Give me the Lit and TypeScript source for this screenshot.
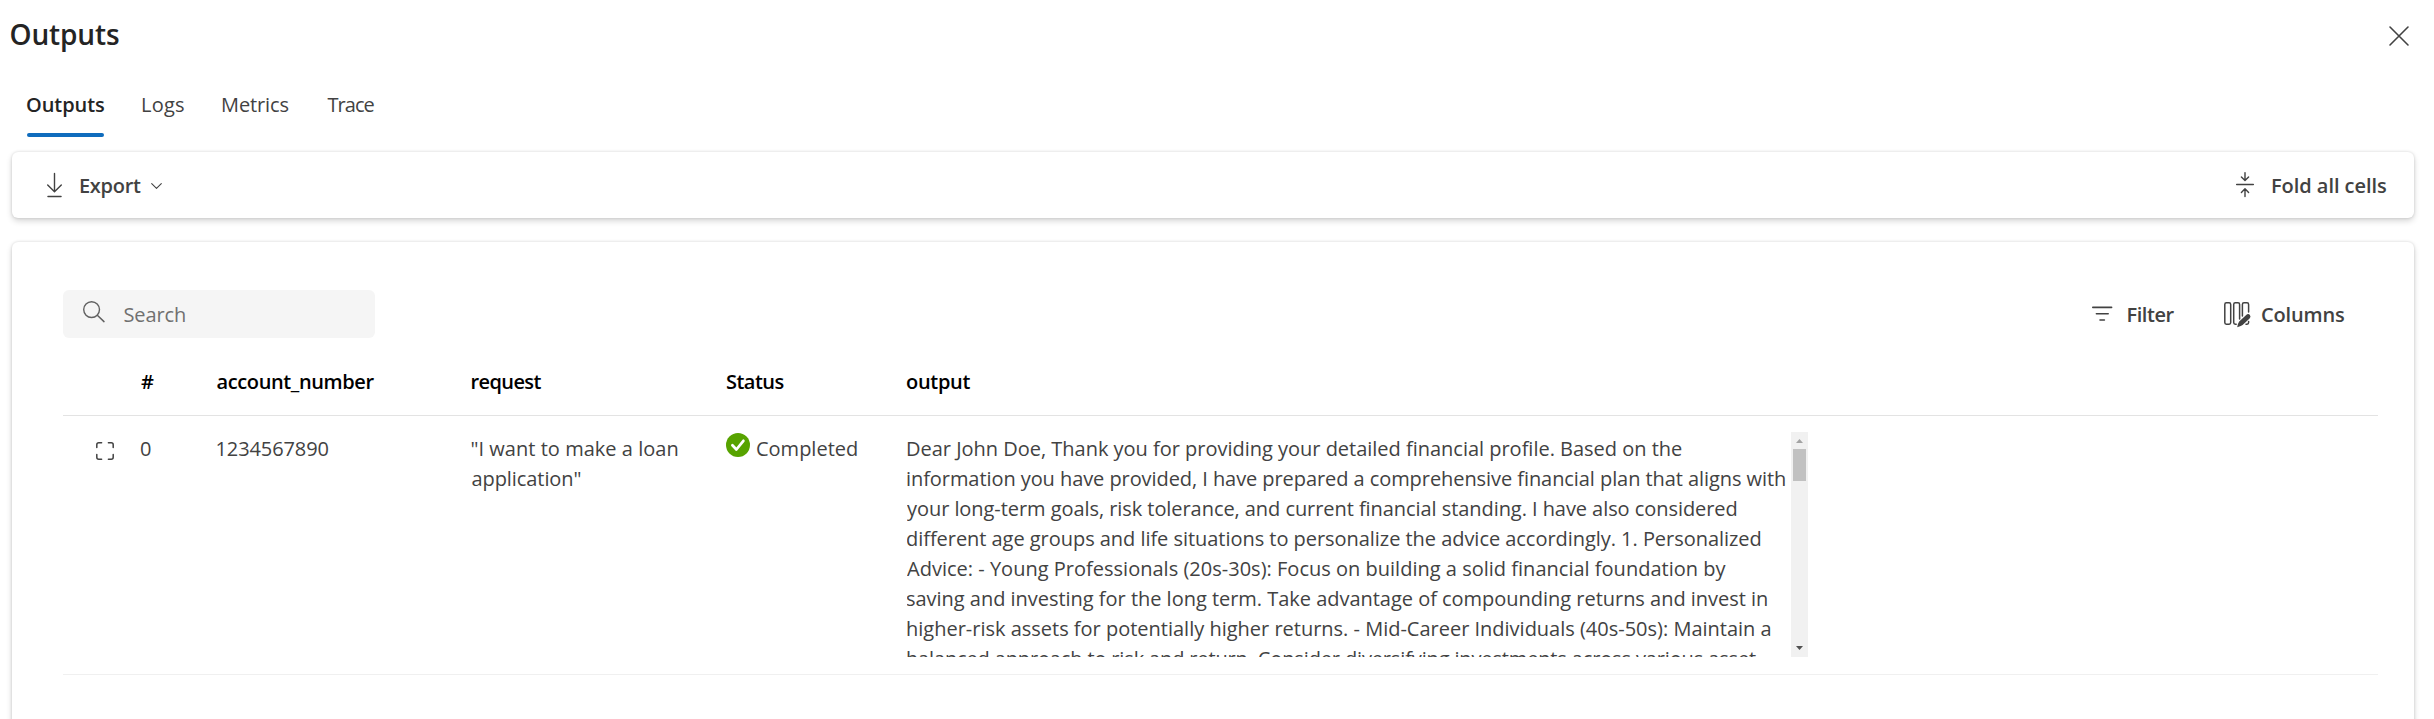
import { LitElement, html, css, svg } from "lit";
import { customElement, property, state } from "lit/decorators.js";

// One line of text, tracked so that its ink spans exactly `w` pixels.
@customElement("fit-text")
class FitText extends LitElement {
  @property() text = "";
  @property({ type: Number }) w = 0;
  @state() spacing = 0;
  @state() shift = 0;
  static styles = css`
    :host { display: block; flex: none; white-space: pre; }
    .line { display: block; }
  `;
  firstUpdated() {
    const cs = getComputedStyle(this);
    const ctx = document.createElement("canvas").getContext("2d")!;
    ctx.font = `${cs.fontWeight} ${cs.fontSize} ${cs.fontFamily}`;
    const m = ctx.measureText(this.text);
    const ink = m.actualBoundingBoxRight + m.actualBoundingBoxLeft;
    this.spacing = this.text.length > 1 ? (this.w - ink) / (this.text.length - 1) : 0;
    this.shift = m.actualBoundingBoxLeft;
  }
  render() {
    return html`<span class="line" style="width:${this.w}px;letter-spacing:${this.spacing}px;text-indent:${this.shift}px">${this.text}</span>`;
  }
}

const t = (text: string, w: number) => html`<fit-text .text=${text} .w=${w}></fit-text>`;

const icons = {
  close: svg`<path d="M1 1 L19 19 M19 1 L1 19" stroke-width="1.6"/>`,
  download: svg`<path d="M7.5 0.5 V18.5 M0.7 12 L7.5 18.8 L14.3 12" stroke-width="1.4"/><path d="M1 23.4 H14" stroke-width="1.5"/>`,
  chevron: svg`<path d="M0.7 0.7 L5.5 5.3 L10.3 0.7" stroke-width="1.1"/>`,
  fold: svg`<path d="M0.7 12.5 H17.3" stroke-width="1.5"/><path d="M9 0.6 V8 M5.4 5 L9 8.6 L12.6 5 M9 24.6 V17.4 M5.4 20.4 L9 16.8 L12.6 20.4" stroke-width="1.4"/>`,
  search: svg`<circle cx="8.6" cy="8.6" r="7.9" stroke-width="1.4"/><path d="M14.3 14.3 L21 20.6" stroke-width="1.5"/>`,
  filter: svg`<path d="M0.8 1.4 H19.6 M4.4 7.8 H16.2 M8 14 H12.4" stroke-width="1.6"/>`,
  columns: svg`<rect x="0.8" y="0.8" width="5.9" height="21.4" rx="1.6" stroke-width="1.5"/><path d="M12.2 22.2 H11.3 Q9.7 22.2 9.7 20.6 V2.4 Q9.7 0.8 11.3 0.8 H14 Q15.6 0.8 15.6 2.4 V17" stroke-width="1.5"/><path d="M18.4 14 V2.4 Q18.4 0.8 20 0.8 H23 Q24.6 0.8 24.6 2.4 V10 M24.6 19.5 V20.6 Q24.6 22.2 23 22.2 H22" stroke-width="1.5"/><path class="solid" d="M22.2 12.9 Q24.2 11.3 25.9 12.9 Q27.3 14.7 25.6 16.6 L18.6 22.9 Q17.6 23.8 13.2 25.2 Q14 21.2 15.2 19.6 Z"/>`,
  expand: svg`<path d="M0.8 5.6 V2.8 Q0.8 0.8 2.8 0.8 H5.6 M12.4 0.8 H15.2 Q17.2 0.8 17.2 2.8 V5.6 M17.2 12.4 V15.2 Q17.2 17.2 15.2 17.2 H12.4 M5.6 17.2 H2.8 Q0.8 17.2 0.8 15.2 V12.4" stroke-width="1.5"/>`,
  done: svg`<circle class="disc" cx="12" cy="12" r="12"/><path class="tick" d="M6.4 12.3 L10.4 16.5 L17.4 7.8"/>`,
};
const icon = (name: keyof typeof icons, w: number, h: number) =>
  html`<svg class="icon ${name}" width=${w} height=${h} viewBox="0 0 ${w} ${h}">${icons[name]}</svg>`;

const tabs: [string, number][] = [["Outputs", 77], ["Logs", 42], ["Metrics", 66.5], ["Trace", 47]];

const output: [string, number][] = [
  ["Dear John Doe, Thank you for providing your detailed financial profile. Based on the", 775],
  ["information you have provided, I have prepared a comprehensive financial plan that aligns with", 878],
  ["your long-term goals, risk tolerance, and current financial standing. I have also considered", 829.5],
  ["different age groups and life situations to personalize the advice accordingly. 1. Personalized", 853.5],
  ["Advice: - Young Professionals (20s-30s): Focus on building a solid financial foundation by", 819.5],
  ["saving and investing for the long term. Take advantage of compounding returns and invest in", 860],
  ["higher-risk assets for potentially higher returns. - Mid-Career Individuals (40s-50s): Maintain a", 863.5],
  ["balanced approach to risk and return. Consider diversifying investments across various asset", 849],
];

@customElement("app-root")
class AppRoot extends LitElement {
  static styles = css`
    :host {
      display: flex; flex-direction: column; height: 719px; overflow: hidden; background: #fff;
      font: 400 20px/30px "Open Sans", "Noto Sans", sans-serif; color: #424242;
      font-kerning: normal;
    }
    * { box-sizing: border-box; }
    .icon { display: block; flex: none; fill: none; stroke: #424242; stroke-linecap: round; stroke-linejoin: round; overflow: visible; }
    .solid { fill: #424242; stroke: none; }
    .disc { fill: #57a300; stroke: none; }
    .tick { stroke: #fff; stroke-width: 2.7; }
    .head { display: flex; flex: none; justify-content: space-between; align-items: flex-start; height: 90px; padding: 14px 25px 0 10.5px; }
    .title { font-size: 28px; line-height: 40px; font-weight: 600; color: #242424; }
    .head .icon { margin-top: 12px; }
    .tabs { display: flex; flex: none; gap: 38px; height: 62px; padding-left: 27px; }
    .tab { height: 47px; }
    .tab:last-child { margin-left: 1px; }
    .tab.active { font-weight: 600; color: #242424; }
    .bar { height: 4px; margin-top: 13px; border-radius: 2px; background: #0f6cbd; }
    .card { margin: 0 20px 0 12px; border-radius: 6px; background: #fff; box-shadow: 0 0 3px rgba(0,0,0,.14), 0 3px 6px rgba(0,0,0,.16); }
    .toolbar { display: flex; justify-content: space-between; align-items: center; height: 66px; padding: 2px 28px 0 35px; flex: none; font-weight: 600; }
    .group { display: flex; align-items: center; }
    .export { gap: 18px; }
    .export .chevron { margin-left: -8px; }
    .foldall { gap: 18px; }
    .fold { margin-top: -3px; }
    .export .download { margin-top: -2px; }
    .panel { margin-top: 24px; height: 520px; padding: 48px 36px 0 51px; flex: none; }
    .tools { display: flex; justify-content: space-between; height: 48px; }
    .searchbox { display: flex; align-items: center; width: 312px; padding: 2px 20px 0; gap: 19.5px; border-radius: 6px; background: #f5f5f5; color: #707070; }
    .searchbox .icon { margin-top: -7px; stroke: #616161; }
    .actions { display: flex; gap: 49px; padding: 2px 34px 0 0; font-weight: 600; }
    .filters { gap: 15px; }
    .filter { margin-top: -3px; }
    .cols { gap: 11.5px; }
    .columns { margin-top: -1px; }
    .row { display: grid; grid-template-columns: 78px 75.5px 255px 254.5px 181px 1fr; }
    .header { height: 78px; padding-top: 29px; border-bottom: 1px solid #e3e3e3; font-weight: 600; color: #000; }
    .body { height: 259px; padding-top: 16px; border-bottom: 1px solid #f0f0f0; }
    .cell { padding-top: 2px; }
    .cell.open { padding: 10px 0 0 33px; }
    .status { display: flex; gap: 7px; }
    .status .icon { margin-top: 1px; }
    .status .words { padding-top: 2px; }
    .scroller { display: flex; justify-content: space-between; width: 901px; height: 225px; overflow: hidden; }
    .lines { padding-top: 2px; }
    .track { display: flex; flex-direction: column; width: 17px; height: 225px; background: #f1f1f1; align-items: center; }
    .up { height: 17px; padding-top: 7px; }
    .thumb { width: 13px; height: 32px; background: #c1c1c1; margin-bottom: auto; }
    .down { height: 17px; padding-top: 6px; }
    .arrow { display: block; }
    .up .arrow { fill: #a3a3a3; }
    .down .arrow { fill: #505050; }
  `;
  render() {
    return html`
      <header class="head"><div class="title">${t("Outputs", 108.5)}</div>${icon("close", 20, 20)}</header>
      <nav class="tabs">
        ${tabs.map(([name, w], i) => html`<div class="tab ${i === 0 ? "active" : ""}">${t(name, w)}${i === 0 ? html`<div class="bar"></div>` : ""}</div>`)}
      </nav>
      <section class="card toolbar">
        <div class="group export">${icon("download", 15, 25)}${t("Export", 61)}${icon("chevron", 11, 6)}</div>
        <div class="group foldall">${icon("fold", 18, 25)}${t("Fold all cells", 114)}</div>
      </section>
      <section class="card panel">
        <div class="tools">
          <div class="searchbox">${icon("search", 22, 22)}${t("Search", 60.5)}</div>
          <div class="actions">
            <div class="group filters">${icon("filter", 21, 15)}${t("Filter", 47)}</div>
            <div class="group cols">${icon("columns", 27, 25)}${t("Columns", 82)}</div>
          </div>
        </div>
        <div class="row header">
          <span></span>${t("#", 12)}${t("account_number", 158)}${t("request", 70)}${t("Status", 57.5)}${t("output", 63.5)}
        </div>
        <div class="row body">
          <div class="cell open">${icon("expand", 18, 18)}</div>
          <div class="cell">${t("0", 10)}</div>
          <div class="cell">${t("1234567890", 112)}</div>
          <div class="cell">${t('"I want to make a loan', 206)}${t('application"', 109)}</div>
          <div class="status">${icon("done", 24, 24)}<div class="words">${t("Completed", 100)}</div></div>
          <div class="scroller">
            <div class="lines">${output.map(([line, w]) => t(line, w))}</div>
            <div class="track">
              <div class="up"><svg class="arrow" width="7" height="4"><path d="M0 4 L3.5 0 L7 4 Z"/></svg></div>
              <div class="thumb"></div>
              <div class="down"><svg class="arrow" width="7" height="4"><path d="M0 0 L3.5 4 L7 0 Z"/></svg></div>
            </div>
          </div>
        </div>
      </section>`;
  }
}
